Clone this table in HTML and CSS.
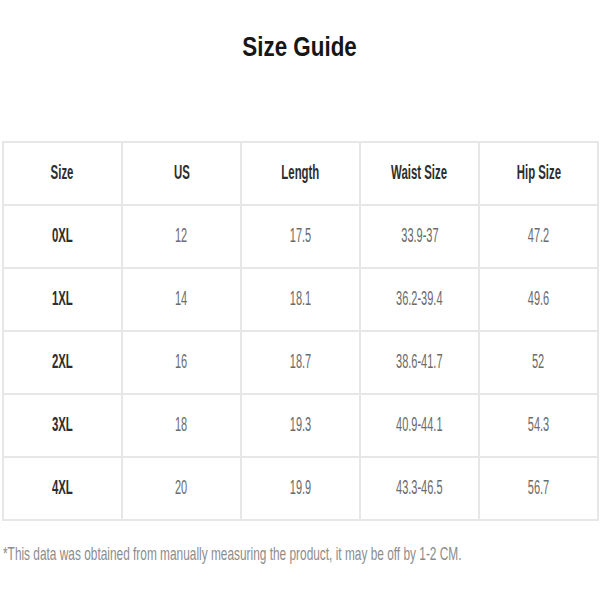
FILE: index.html
```html
<!DOCTYPE html>
<html>
<head>
<meta charset="utf-8">
<link rel="stylesheet" href="styles.css">
</head>
<body>
<div class="page">
  <h1 class="title"><span class="squeeze">Size Guide</span></h1>
  <table class="sizes">
    <thead>
      <tr><th><span class="squeeze">Size</span></th><th><span class="squeeze">US</span></th><th><span class="squeeze">Length</span></th><th><span class="squeeze">Waist Size</span></th><th><span class="squeeze">Hip Size</span></th></tr>
    </thead>
    <tbody>
      <tr><th><span class="squeeze">0XL</span></th><td><span class="squeeze">12</span></td><td><span class="squeeze">17.5</span></td><td><span class="squeeze">33.9-37</span></td><td><span class="squeeze">47.2</span></td></tr>
      <tr><th><span class="squeeze">1XL</span></th><td><span class="squeeze">14</span></td><td><span class="squeeze">18.1</span></td><td><span class="squeeze">36.2-39.4</span></td><td><span class="squeeze">49.6</span></td></tr>
      <tr><th><span class="squeeze">2XL</span></th><td><span class="squeeze">16</span></td><td><span class="squeeze">18.7</span></td><td><span class="squeeze">38.6-41.7</span></td><td><span class="squeeze">52</span></td></tr>
      <tr><th><span class="squeeze">3XL</span></th><td><span class="squeeze">18</span></td><td><span class="squeeze">19.3</span></td><td><span class="squeeze">40.9-44.1</span></td><td><span class="squeeze">54.3</span></td></tr>
      <tr><th><span class="squeeze">4XL</span></th><td><span class="squeeze">20</span></td><td><span class="squeeze">19.9</span></td><td><span class="squeeze">43.3-46.5</span></td><td><span class="squeeze">56.7</span></td></tr>
    </tbody>
  </table>
  <p class="note"><span class="squeeze">*This data was obtained from manually measuring the product, it may be off by 1-2 CM.</span></p>
</div>
</body>
</html>
```
FILE: styles.css
```css
html, body {
  margin: 0;
  padding: 0;
  background: #ffffff;
}
.page {
  width: 600px;
  height: 600px;
  overflow: hidden;
  font-family: "Liberation Sans", Arial, sans-serif;
  padding-top: 29px;
  box-sizing: border-box;
}
.squeeze {
  display: inline-block;
  white-space: nowrap;
  transform-origin: 50% 50%;
}
.title {
  margin: 0;
  text-align: center;
  font-size: 28px;
  font-weight: bold;
  color: #161616;
  line-height: 36px;
}
.title .squeeze {
  transform: scaleX(0.8);
}
.sizes {
  margin: 76px 0 0 2px;
  width: 597px;
  border-collapse: collapse;
  table-layout: fixed;
}
.sizes th, .sizes td {
  border: 2px solid #e7e7e7;
  height: 58px;
  padding: 0 0 3px;
  text-align: center;
  font-size: 20px;
  line-height: 22px;
}
.sizes th {
  color: #2e2e2e;
  font-weight: bold;
}
.sizes th .squeeze {
  transform: scaleX(0.57);
}
.sizes td {
  color: #6b6b6b;
  font-weight: normal;
}
.sizes td .squeeze {
  transform: scaleX(0.55);
}
.note {
  margin: 22px 0 0 3px;
  font-size: 19px;
  line-height: 22px;
  color: #8c8c8c;
}
.note .squeeze {
  transform-origin: 0 50%;
  transform: scaleX(0.625);
}
```
